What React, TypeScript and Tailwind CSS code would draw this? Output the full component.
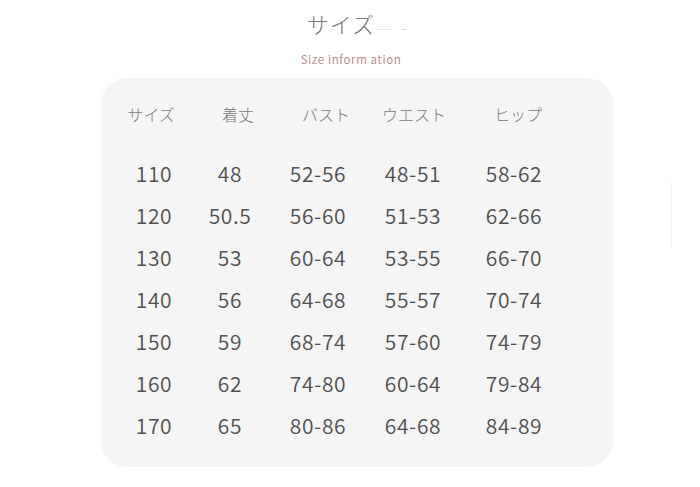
import React from "react";

const rows = [
  ["110", "48", "52-56", "48-51", "58-62"],
  ["120", "50.5", "56-60", "51-53", "62-66"],
  ["130", "53", "60-64", "53-55", "66-70"],
  ["140", "56", "64-68", "55-57", "70-74"],
  ["150", "59", "68-74", "57-60", "74-79"],
  ["160", "62", "74-80", "60-64", "79-84"],
  ["170", "65", "80-86", "64-68", "84-89"],
];

const headers = ["サイズ", "着丈", "バスト", "ウエスト", "ヒップ"];
const headW = ["w-[80px]", "w-[94px]", "w-[82px]", "w-[94px]", "w-[114px]"];
const dataW = ["w-[80px]", "w-[72px]", "w-[104px]", "w-[86px]", "w-[116px]"];

export default function App() {
  return (
    <div
      className="w-[700px] h-[487px] bg-white relative overflow-hidden"
      style={{ fontFamily: '"Noto Sans CJK JP", "Noto Sans", sans-serif' }}
    >
      <div className="flex flex-col items-center pt-[6px]">
        <div className="flex items-end ml-[14px]">
          <span className="text-[22px] leading-[34px] text-[#777777] font-light tracking-[1px]">サイズ</span>
          <div className="flex items-center gap-[10px] mb-[10px] ml-[2px]">
            <div className="w-[14px] h-px bg-[#e6e6e6]" />
            <div className="w-[6px] h-px bg-[#dcdcdc]" />
          </div>
        </div>
        <div className="mt-[10px] text-[11.5px] leading-[18px] text-[#c08a8c] tracking-[0.6px] ml-[2px]">
          Size inform ation
        </div>
      </div>

      <div className="mt-[10px] ml-[101px] w-[512px] h-[389px] rounded-[26px] bg-[#f5f5f5] pt-[24px]">
        <div className="flex pl-[10px] text-[16px] leading-[24px] text-[#7a7a7a] font-light">
          {headers.map((h, i) => (
            <div key={i} className={`${headW[i]} text-center`}>
              {h}
            </div>
          ))}
        </div>
        <div className="mt-[27px] flex flex-col">
          {rows.map((r, ri) => (
            <div
              key={ri}
              className="flex pl-[13px] h-[42px] items-center text-[21px] text-[#505050] font-[350] tracking-[0.6px]"
            >
              {r.map((c, ci) => (
                <div key={ci} className={`${dataW[ci]} text-center`}>
                  {c}
                </div>
              ))}
            </div>
          ))}
        </div>
      </div>

      <div className="absolute left-[671px] top-[182px] w-px h-[66px] bg-[#f2f2f2]" />
    </div>
  );
}
